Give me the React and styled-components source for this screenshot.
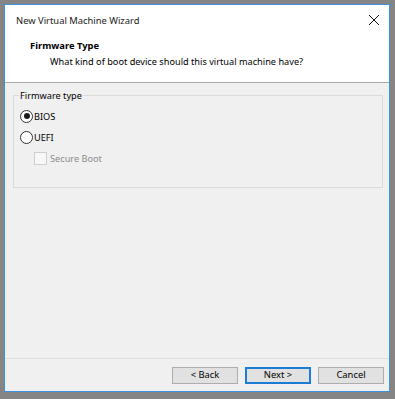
import React from "react";
import styled, { createGlobalStyle } from "styled-components";

const Global = createGlobalStyle`
  html, body { margin: 0; padding: 0; }
  body { font-family: "Noto Sans", "Open Sans", sans-serif; }
`;

const Frame = styled.div`
  width: 395px;
  height: 399px;
  box-sizing: border-box;
  background: #858585;
  padding: 4px 5px 7px 4px;
  display: flex;
`;

const Window = styled.div`
  flex: 1;
  display: flex;
  flex-direction: column;
  border: 1px solid #3c93dd;
  background: #f0f0f0;
  font-size: 9.2px;
  color: #000;
`;

const TitleBar = styled.div`
  height: 30px;
  background: #fff;
  display: flex;
  align-items: center;
  justify-content: space-between;
  padding: 0 9px 0 11px;
  font-size: 9.4px;
  color: #1a1a1a;
`;

const Header = styled.div`
  height: 48px;
  background: #fff;
  border-bottom: 1px solid #a8a8a8;
  padding: 3px 0 0 25px;
  box-sizing: border-box;
  display: flex;
  flex-direction: column;
  gap: 1px;
`;

const HeaderTitle = styled.div`
  font-weight: bold;
  font-size: 9.4px;
  line-height: 15px;
`;

const HeaderSub = styled.div`
  padding-left: 20px;
  font-size: 9.2px;
  line-height: 15px;
`;

const Body = styled.div`
  flex: 1;
  padding: 6px 6px 0 8px;
  display: flex;
  flex-direction: column;
`;

const Group = styled.fieldset`
  margin: 0;
  border: 1px solid #dadada;
  padding: 6px 6px 8px 6px;
  height: 99px;
  box-sizing: border-box;
  display: flex;
  flex-direction: column;
  gap: 5px;
`;

const Legend = styled.legend`
  padding: 0 1px;
  font-size: 9.2px;
  margin-left: -1px;
`;

const Option = styled.label`
  display: flex;
  align-items: center;
  height: 16px;
  gap: 1px;
  padding-left: ${(p) => (p.$indent ? "14px" : "0")};
  color: ${(p) => (p.$disabled ? "#8d8d8d" : "#000")};
  font-size: 9.2px;
`;

const Radio = styled.span`
  width: 11px;
  height: 11px;
  border: 1px solid #333;
  border-radius: 50%;
  background: #fff;
  display: flex;
  align-items: center;
  justify-content: center;
  &::after {
    content: "";
    width: 6px;
    height: 6px;
    border-radius: 50%;
    background: ${(p) => (p.$checked ? "#1a1a1a" : "transparent")};
  }
`;

const Check = styled.span`
  width: 11px;
  height: 11px;
  border: 1px solid #cfcfcf;
  background: #f7f7f7;
  margin-right: 2px;
`;

const Footer = styled.div`
  height: 32px;
  border-top: 1px solid #dedede;
  display: flex;
  justify-content: flex-end;
  align-items: center;
  gap: 7px;
  padding: 0 5px 0 0;
`;

const Button = styled.button`
  width: 66px;
  height: 17px;
  box-sizing: border-box;
  padding: 0;
  background: #e1e1e1;
  border: 1px solid ${(p) => (p.$default ? "#1a7cd2" : "#adadad")};
  box-shadow: ${(p) => (p.$default ? "inset 0 0 0 1px #1a7cd2" : "none")};
  font-family: "Noto Sans", "Open Sans", sans-serif;
  font-size: 9.4px;
  color: #000;
  line-height: 14px;
`;

const Close = () => (
  <svg width="12" height="12" viewBox="0 0 12 12">
    <path d="M1 1 L11 11 M11 1 L1 11" stroke="#111" strokeWidth="1" />
  </svg>
);

export default function App() {
  return (
    <>
      <Global />
      <Frame>
        <Window>
          <TitleBar>
            <span>New Virtual Machine Wizard</span>
            <Close />
          </TitleBar>
          <Header>
            <HeaderTitle>Firmware Type</HeaderTitle>
            <HeaderSub>What kind of boot device should this virtual machine have?</HeaderSub>
          </Header>
          <Body>
            <Group>
              <Legend>Firmware type</Legend>
              <Option>
                <Radio $checked />
                BIOS
              </Option>
              <Option>
                <Radio />
                UEFI
              </Option>
              <Option $indent $disabled>
                <Check />
                Secure Boot
              </Option>
            </Group>
          </Body>
          <Footer>
            <Button>&lt; Back</Button>
            <Button $default>Next &gt;</Button>
            <Button>Cancel</Button>
          </Footer>
        </Window>
      </Frame>
    </>
  );
}
